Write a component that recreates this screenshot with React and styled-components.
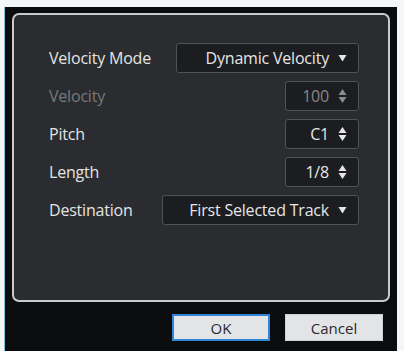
import styled, { createGlobalStyle } from 'styled-components';

const GlobalStyle = createGlobalStyle`
  html, body {
    margin: 0;
    padding: 0;
    background: #f4f6f7;
  }
  body {
    font-family: 'Open Sans', 'Noto Sans', sans-serif;
  }
`;

// 바깥 창
const Window = styled.div`
  margin: 7px 0 0 4px;
  width: 393px;
  height: 344px;
  box-sizing: border-box;
  background: #0b0c0e;
  border-left: 1px solid #7fc4d6;
  padding: 6px 7px 0 7px;
  display: flex;
  flex-direction: column;
`;

const Panel = styled.div`
  height: 289px;
  box-sizing: border-box;
  border: 2px solid #c9cacb;
  border-radius: 7px;
  background: #2a2c2f;
  padding: 28px 29px 0 35px;
  display: grid;
  grid-template-columns: auto 1fr;
  grid-auto-rows: 30px;
  row-gap: 8px;
  align-items: center;
  align-content: start;
`;

const Label = styled.div`
  font-size: 16px;
  font-weight: 500;
  letter-spacing: -0.2px;
  color: ${({ disabled }) => (disabled ? '#77797c' : '#e4e4e4')};
  white-space: nowrap;
`;

const Control = styled.div`
  justify-self: end;
  width: ${({ w }) => w}px;
  height: 30px;
  box-sizing: border-box;
  border: 1px solid #505256;
  border-radius: 3px;
  background: #1c1d20;
  display: flex;
  align-items: center;
  justify-content: flex-end;
  gap: 9px;
  padding-right: 11px;
  font-size: 16px;
  font-weight: 500;
  letter-spacing: -0.2px;
  color: ${({ disabled }) => (disabled ? '#86888b' : '#e6e6e6')};
`;

const Footer = styled.div`
  display: flex;
  justify-content: flex-end;
  gap: 15px;
  padding: 12px 7px 0 0;
`;

const Button = styled.button`
  width: 98px;
  height: 27px;
  box-sizing: border-box;
  background: #e3e4e6;
  border: ${({ focused }) => (focused ? '2px solid #2f86d6' : '1px solid #d0d1d3')};
  color: #2a2a2e;
  font-family: 'Open Sans', 'Noto Sans', sans-serif;
  font-size: 15px;
  padding: 0;
`;

const Arrow = ({ color = '#e6e6e6' }) => (
  <svg width="9" height="8" viewBox="0 0 9 8">
    <path d="M0.5 1 L8.5 1 L4.5 7.5 Z" fill={color} />
  </svg>
);

const Spin = ({ color = '#e6e6e6' }) => (
  <svg width="9" height="16" viewBox="0 0 9 16">
    <path d="M0.5 7 L8.5 7 L4.5 1 Z" fill={color} />
    <path d="M0.5 9 L8.5 9 L4.5 15 Z" fill={color} />
  </svg>
);

export default function App() {
  return (
    <>
      <GlobalStyle />
      <Window>
        <Panel>
          <Label>Velocity Mode</Label>
          <Control w={183}>
            Dynamic Velocity <Arrow />
          </Control>
          <Label disabled>Velocity</Label>
          <Control w={74} disabled>
            100 <Spin color="#8a8c8f" />
          </Control>
          <Label>Pitch</Label>
          <Control w={74}>
            C1 <Spin />
          </Control>
          <Label>Length</Label>
          <Control w={74}>
            1/8 <Spin />
          </Control>
          <Label>Destination</Label>
          <Control w={197}>
            First Selected Track <Arrow />
          </Control>
        </Panel>
        <Footer>
          <Button focused>OK</Button>
          <Button>Cancel</Button>
        </Footer>
      </Window>
    </>
  );
}
